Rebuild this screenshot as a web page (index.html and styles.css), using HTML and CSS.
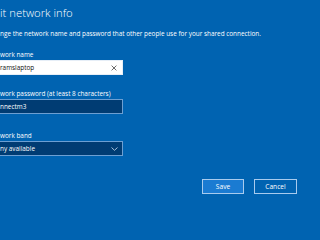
FILE: index.html
```html
<!DOCTYPE html>
<html lang="en">
<head>
<meta charset="utf-8">
<title>Edit network info</title>
<link rel="stylesheet" href="styles.css">
</head>
<body>
<div class="dialog">
  <h1 class="title">it network info</h1>
  <p class="subtitle">nge the network name and password that other people use for your shared connection.</p>

  <label class="label label-name">work name</label>
  <div class="field field-light">
    <span class="value">ramslaptop</span>
    <svg class="icon-x" width="6" height="6" viewBox="0 0 6 6"><path d="M0.6 0.6 L5.4 5.4 M5.4 0.6 L0.6 5.4" stroke="#444" stroke-width="0.8" fill="none"/></svg>
  </div>

  <label class="label label-pass">work password (at least 8 characters)</label>
  <div class="field field-dark">
    <span class="value">nnectm3</span>
  </div>

  <label class="label label-band">work band</label>
  <div class="field field-dark field-select">
    <span class="value">ny available</span>
    <svg class="icon-chev" width="7" height="4" viewBox="0 0 7 4"><path d="M0.5 0.5 L3.5 3.3 L6.5 0.5" stroke="#cfe1f3" stroke-width="0.8" fill="none"/></svg>
  </div>

  <div class="actions">
    <button class="btn btn-primary">Save</button>
    <button class="btn">Cancel</button>
  </div>
</div>
</body>
</html>
```
FILE: styles.css
```css
html, body {
  margin: 0;
  padding: 0;
}
body {
  width: 300px;
  height: 200px;
  overflow: hidden;
  background: #0063b1;
  color: #ffffff;
  font-family: "Open Sans", "Noto Sans", "Liberation Sans", sans-serif;
}
.dialog {
  padding-top: 6px;
  display: flex;
  flex-direction: column;
  align-items: flex-start;
}
.title {
  margin: 0;
  font-size: 11.3px;
  line-height: 14px;
  font-weight: 300;
}
.subtitle {
  margin: 9px 0 0 0;
  font-size: 6.4px;
  line-height: 10px;
}
.label {
  display: block;
  font-size: 6.4px;
  line-height: 10px;
}
.label-name { margin-top: 11px; }
.label-pass { margin-top: 14px; }
.label-band { margin-top: 17px; }
.field {
  box-sizing: border-box;
  width: 136px;
  height: 15px;
  margin-left: -13px;
  padding: 0 5px 0 12px;
  display: flex;
  align-items: center;
  justify-content: space-between;
  font-size: 6.4px;
}
.field-light {
  background: #ffffff;
  border: 1px solid #e6eef7;
  color: #111111;
}
.field-dark {
  background: #003c73;
  border: 1px solid #6d9fd2;
  color: #ffffff;
}
.field-select {
  padding-right: 4px;
}
.icon-x, .icon-chev {
  display: block;
}
.actions {
  align-self: stretch;
  margin-top: 23px;
  padding-right: 3px;
  display: flex;
  justify-content: flex-end;
  gap: 10px;
}
.btn {
  box-sizing: border-box;
  width: 43px;
  height: 15px;
  padding: 0;
  font-family: inherit;
  font-size: 6.6px;
  color: #ffffff;
  background: #0063b1;
  border: 1px solid #a8cbee;
}
.btn-primary {
  width: 42px;
  background: #1a7bd2;
}
```
